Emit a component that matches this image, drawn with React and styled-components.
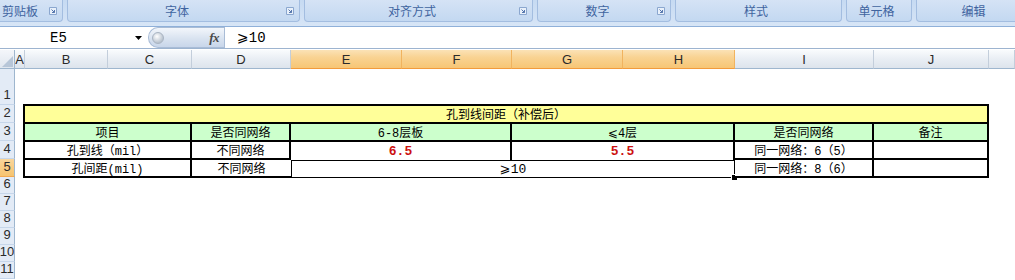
import styled, { createGlobalStyle } from 'styled-components'

const GlobalStyle = createGlobalStyle`
  html, body { margin: 0; padding: 0; background: #fff; }
  body { width: 1015px; height: 280px; overflow: hidden; }
`

const UI = `"Noto Sans CJK SC", "Liberation Sans", sans-serif`
const CELL = `"Liberation Mono", "Noto Sans CJK SC", "DejaVu Sans", monospace`
const HEAD = `"Liberation Sans", Arial, sans-serif`

const COLS = [
  ['A', 10], ['B', 83], ['C', 84], ['D', 99], ['E', 111], ['F', 110],
  ['G', 111], ['H', 112], ['I', 139], ['J', 115], ['', 26],
]
const ACTIVE_COLS = ['E', 'F', 'G', 'H']
const ROWS = [[1, 36], [2, 18], [3, 18], [4, 18], [5, 18], [6, 17], [7, 17], [8, 17], [9, 17], [10, 17], [11, 17]]

const GROUPS = [
  { label: '剪贴板', w: 73, ml: -10, launcher: true },
  { label: '字体', w: 233, launcher: true },
  { label: '对齐方式', w: 229, launcher: true },
  { label: '数字', w: 134, launcher: true },
  { label: '样式', w: 167 },
  { label: '单元格', w: 66 },
  { label: '编辑', w: 120 },
]

const Page = styled.div`
  display: flex;
  flex-direction: column;
  width: 1015px;
  height: 280px;
  overflow: hidden;
`

const Ribbon = styled.div`
  display: flex;
  gap: 4px;
  height: 27px;
  box-sizing: border-box;
  background: linear-gradient(#c6daf2, #d7e5f6);
  border-bottom: 1px solid #8fb0d9;
  overflow: hidden;
`

const Group = styled.div`
  flex: none;
  display: flex;
  align-items: center;
  width: ${({ $w }) => $w}px;
  margin-left: ${({ $ml }) => $ml || 0}px;
  height: 22px;
  box-sizing: border-box;
  padding-right: 5px;
  border: 1px solid #a3bde0;
  border-top: none;
  border-radius: 0 0 4px 4px;
  background: linear-gradient(#d5e3f5, #c3d8f1);
`

const GroupLabel = styled.span`
  flex: 1;
  text-align: center;
  font: 12px ${UI};
  color: #40649f;
`

const FormulaBar = styled.div`
  display: flex;
  height: 22px;
  box-sizing: border-box;
  border-bottom: 1px solid #9db4d0;
  margin-bottom: 1px;
  background: #fff;
`

const NameBox = styled.div`
  width: 148px;
  display: flex;
  align-items: center;
`

const NameText = styled.span`
  width: 117px;
  text-align: center;
  font: 14px ${CELL};
  color: #000;
`

const DropArrow = styled.svg`
  margin-left: 18px;
`

const FxPill = styled.div`
  width: 76px;
  box-sizing: border-box;
  display: flex;
  align-items: center;
  justify-content: space-between;
  padding: 0 5px 0 3px;
  border: 1px solid #a9bcd6;
  border-right: none;
  border-radius: 10px 0 0 10px;
  background: linear-gradient(#f3f6fb, #d9e3f0 55%, #c8d6ea);
`

const Knob = styled.span`
  width: 10px;
  height: 10px;
  border-radius: 50%;
  background: radial-gradient(circle at 40% 35%, #ffffff, #b9c3cf 70%);
  border: 1px solid #a9b4c2;
`

const Fx = styled.span`
  font: italic bold 13px "Liberation Serif", serif;
  color: #4a4a4a;
  letter-spacing: -0.5px;
`

const FormulaInput = styled.div`
  flex: 1;
  display: flex;
  align-items: center;
  padding-left: 12px;
  border-left: 1px solid #a9bcd6;
  font: 14px ${CELL};
  color: #000;
`

const Sheet = styled.div`
  display: grid;
  grid-template-columns: 15px ${COLS.map((c) => `${c[1]}px`).join(' ')};
  grid-template-rows: 19px ${ROWS.map((r) => `${r[1]}px`).join(' ')};
  background: #fff;
`

const Corner = styled.div`
  grid-column: 1;
  grid-row: 1;
  position: relative;
  background: linear-gradient(#f4f6fa, #dfe6ef);
  border-right: 1px solid #9eb6ce;
  border-bottom: 1px solid #9eb6ce;
`

const CornerMark = styled.svg`
  position: absolute;
  right: 1px;
  bottom: 1px;
`

const ColHead = styled.div`
  grid-row: 1;
  display: flex;
  align-items: center;
  justify-content: center;
  overflow: hidden;
  box-sizing: border-box;
  font: 13px ${HEAD};
  color: #2a2a2a;
  border-right: 1px solid ${({ $active }) => ($active ? '#f1b35e' : '#c3cedb')};
  border-bottom: 1px solid ${({ $active }) => ($active ? '#f29b3c' : '#9eb6ce')};
  background: ${({ $active }) =>
    $active
      ? 'linear-gradient(#fbe2b6, #f9d393 40%, #f7c675)'
      : 'linear-gradient(#f9fbfd, #e9eef4 50%, #dde4ec)'};
`

const RowHead = styled.div`
  grid-column: 1;
  grid-row: ${({ $row }) => $row + 1};
  display: flex;
  align-items: flex-end;
  justify-content: center;
  padding-bottom: 2px;
  overflow: hidden;
  box-sizing: border-box;
  font: 13px ${HEAD};
  color: #2a2a2a;
  border-right: 1px solid #9eb6ce;
  border-bottom: 1px solid ${({ $active }) => ($active ? '#f2a94f' : '#c6d6ea')};
  background: ${({ $active }) => ($active ? 'linear-gradient(#f9d59a, #f6c470)' : '#e3ebf6')};
`

const Table = styled.div`
  grid-column: 3 / 12;
  grid-row: 3 / 7;
  align-self: start;
  display: grid;
  grid-template-columns: 167px 99px 221px 223px 139px 115px;
  grid-auto-rows: 18px;
  width: 964px;
  margin: -1px 0 0 -2px;
  border-top: 2px solid #000;
  border-left: 2px solid #000;
`

const Cell = styled.div`
  position: relative;
  grid-column: span ${({ $span }) => $span || 1};
  display: flex;
  align-items: center;
  justify-content: center;
  box-sizing: border-box;
  white-space: nowrap;
  font: ${({ $num }) => ($num ? `bold 13px ${CELL}` : `12px ${CELL}`)};
  color: ${({ $num }) => ($num ? '#cc1010' : '#000')};
  background: ${({ $bg }) => $bg || '#fff'};
  border-right: ${({ $noRight }) => ($noRight ? 'none' : '2px solid #000')};
  border-bottom: ${({ $noBottom }) => ($noBottom ? 'none' : '2px solid #000')};
`

const SelectedCell = styled(Cell)`
  border: 1px solid #000;
  font-size: 13px;
`

const FillHandle = styled.span`
  position: absolute;
  right: -4px;
  bottom: -4px;
  width: 5px;
  height: 5px;
  background: #000;
  border: 1px solid #fff;
`

const Launcher = () => (
  <svg width="8" height="8" viewBox="0 0 8 8">
    <path d="M0.5 0.5h7v7h-7z" fill="#e8f0fa" stroke="#8ba7cf" />
    <path d="M2.5 2.5l3 3M5.5 3v2.5H3" stroke="#5677ad" fill="none" />
  </svg>
)

const YELLOW = '#ffff99'
const GREEN = '#ccffcc'

const App = () => (
  <Page>
    <GlobalStyle />
    <Ribbon>
      {GROUPS.map((g) => (
        <Group key={g.label} $w={g.w} $ml={g.ml}>
          <GroupLabel>{g.label}</GroupLabel>
          {g.launcher && <Launcher />}
        </Group>
      ))}
    </Ribbon>

    <FormulaBar>
      <NameBox>
        <NameText>E5</NameText>
        <DropArrow width="7" height="4" viewBox="0 0 7 4">
          <path d="M0 0h7L3.5 4z" fill="#000" />
        </DropArrow>
      </NameBox>
      <FxPill>
        <Knob />
        <Fx>fx</Fx>
      </FxPill>
      <FormulaInput>⩾10</FormulaInput>
    </FormulaBar>

    <Sheet>
      <Corner>
        <CornerMark width="11" height="11" viewBox="0 0 11 11">
          <path d="M11 0V11H0z" fill="#b7c6d8" />
        </CornerMark>
      </Corner>
      {COLS.map(([name], i) => (
        <ColHead key={i} style={{ gridColumn: i + 2 }} $active={ACTIVE_COLS.includes(name)}>
          {name}
        </ColHead>
      ))}
      {ROWS.map(([n]) => (
        <RowHead key={n} $row={n} $active={n === 5}>
          {n}
        </RowHead>
      ))}

      <Table>
        <Cell $span={6} $bg={YELLOW}>孔到线间距（补偿后）</Cell>

        <Cell $bg={GREEN}>项目</Cell>
        <Cell $bg={GREEN}>是否同网络</Cell>
        <Cell $bg={GREEN}>6-8层板</Cell>
        <Cell $bg={GREEN}>⩽4层</Cell>
        <Cell $bg={GREEN}>是否同网络</Cell>
        <Cell $bg={GREEN}>备注</Cell>

        <Cell>孔到线（mil）</Cell>
        <Cell>不同网络</Cell>
        <Cell $num $noBottom>6.5</Cell>
        <Cell $num $noBottom>5.5</Cell>
        <Cell>同一网络：6（5）</Cell>
        <Cell />

        <Cell>孔间距(mil)</Cell>
        <Cell $noRight>不同网络</Cell>
        <SelectedCell $span={2}>
          ⩾10
          <FillHandle />
        </SelectedCell>
        <Cell>同一网络：8（6）</Cell>
        <Cell />
      </Table>
    </Sheet>
  </Page>
)

export default App
